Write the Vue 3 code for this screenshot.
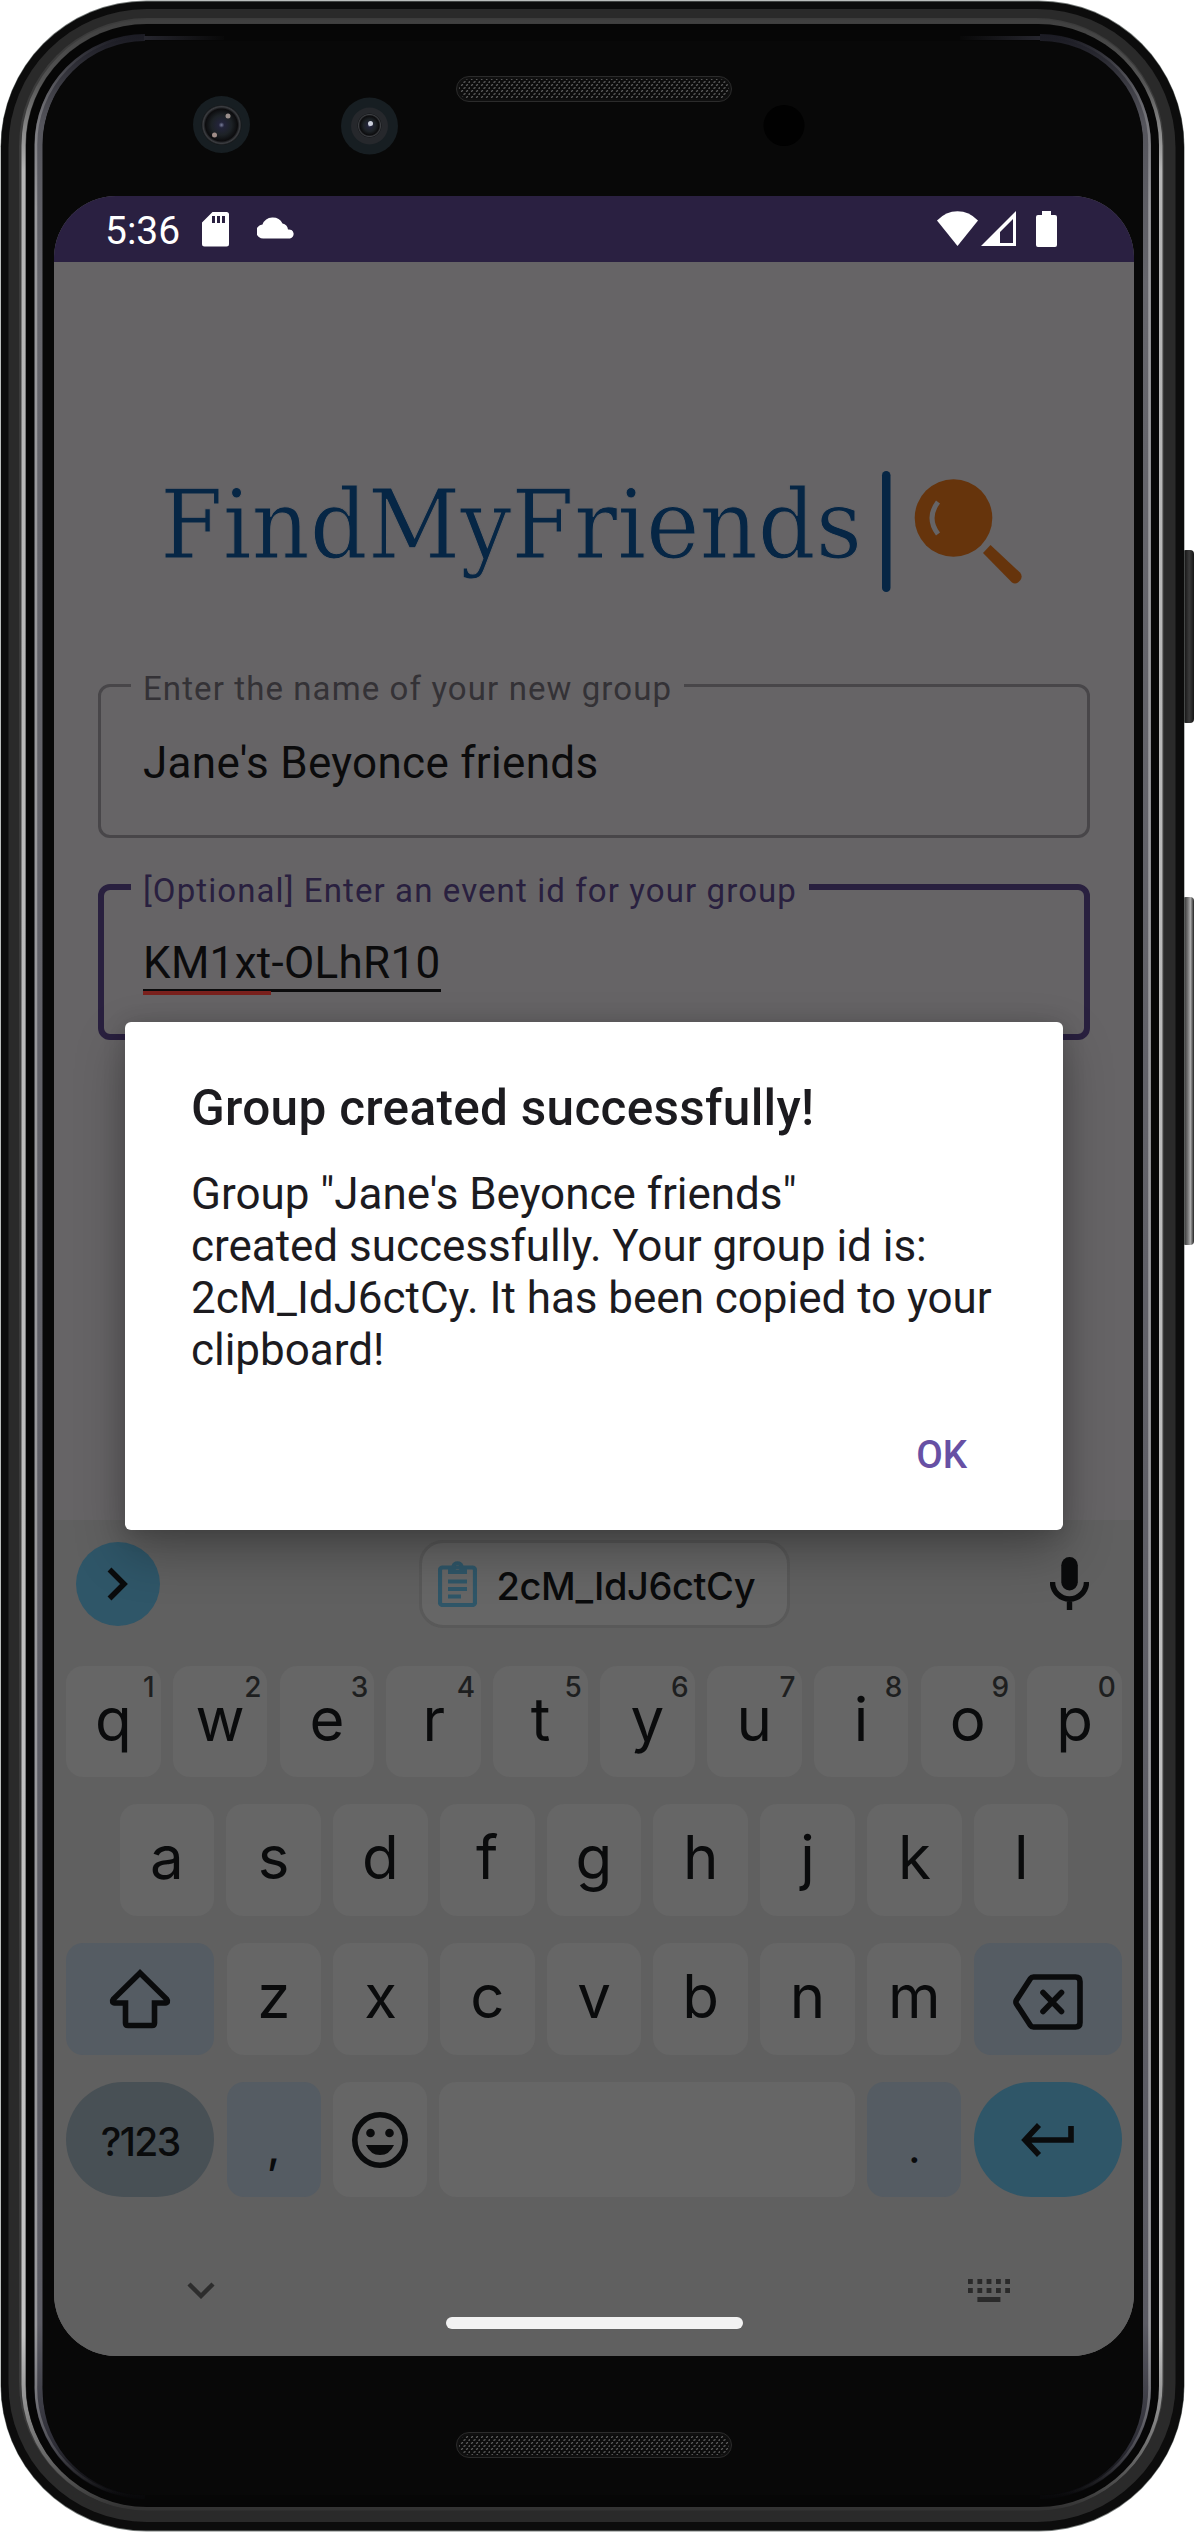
<script setup>
const topRow = [
  ['q', 1], ['w', 2], ['e', 3], ['r', 4], ['t', 5],
  ['y', 6], ['u', 7], ['i', 8], ['o', 9], ['p', 0],
]
const homeRow = [...'asdfghjkl']
const lowerRow = [...'zxcvbnm']
const keyDots = [0, 9.4, 18.6, 28, 37.2]
</script>

<template>
  <div class="device">
    <svg class="frame" viewBox="0 0 1194 2532" width="1194" height="2532" aria-hidden="true">
      <defs>
        <linearGradient id="metal" x1="0" y1="0" x2="0" y2="1">
          <stop offset="0" stop-color="#404040" />
          <stop offset="0.025" stop-color="#555" />
          <stop offset="0.06" stop-color="#b5b5b5" />
          <stop offset="0.93" stop-color="#c4c4c4" />
          <stop offset="0.98" stop-color="#666" />
          <stop offset="1" stop-color="#333" />
        </linearGradient>
        <linearGradient id="glint" x1="0" y1="0" x2="0" y2="1">
          <stop offset="0" stop-color="#1c1c24" />
          <stop offset="0.035" stop-color="#55555c" />
          <stop offset="0.1" stop-color="#66666c" />
          <stop offset="0.93" stop-color="#5c5c64" />
          <stop offset="0.98" stop-color="#2c2c35" />
          <stop offset="1" stop-color="#08080a" />
        </linearGradient>
        <linearGradient id="rim" x1="0" y1="0" x2="0" y2="1">
          <stop offset="0" stop-color="#99999c" stop-opacity="0" />
          <stop offset="0.07" stop-color="#99999c" />
          <stop offset="0.93" stop-color="#99999c" />
          <stop offset="1" stop-color="#99999c" stop-opacity="0" />
        </linearGradient>
        <linearGradient id="fadeL"><stop offset="0" stop-color="#26262e" /><stop offset="1" stop-color="#080808" /></linearGradient>
        <linearGradient id="fadeR"><stop offset="0" stop-color="#080808" /><stop offset="1" stop-color="#26262e" /></linearGradient>
        <linearGradient id="button"><stop offset="0" stop-color="#050505" /><stop offset="0.6" stop-color="#3a3a3a" /><stop offset="1" stop-color="#161616" /></linearGradient>
        <linearGradient id="buttonLit"><stop offset="0" stop-color="#111" /><stop offset="0.5" stop-color="#777" /><stop offset="0.7" stop-color="#aaa" /><stop offset="1" stop-color="#222" /></linearGradient>
        <pattern id="mesh" width="10" height="6" patternUnits="userSpaceOnUse">
          <rect width="10" height="6" fill="#0c0c0c" />
          <path d="M1 1.5l2-1M6 1.5l2-1M3.5 4.5l2-1M8.500 4.500l2-1" stroke="#6a6a6a" stroke-width="1.2" />
        </pattern>
        <radialGradient id="lens">
          <stop offset="0" stop-color="#7a7f9c" />
          <stop offset="0.14" stop-color="#23243a" />
          <stop offset="0.5" stop-color="#1d2226" />
          <stop offset="0.8" stop-color="#0c0c0e" />
          <stop offset="0.92" stop-color="#3c3e42" />
          <stop offset="1" stop-color="#121416" />
        </radialGradient>
      </defs>
      <rect x="1182" y="550" width="12" height="173" rx="4" fill="url(#button)" />
      <rect x="1182" y="897" width="12" height="348" rx="4" fill="url(#buttonLit)" />
      <rect x="0.500" y="0.500" width="1184" height="2531" rx="146" fill="#777c7a" />
      <rect x="1" y="1.500" width="1183" height="2529" rx="145" fill="#0c0c0c" />
      <rect x="8.500" y="9" width="1167" height="2513" rx="138" fill="#2a2a2a" />
      <rect x="19" y="18" width="1145" height="2492" rx="128" fill="#3c3c3c" />
      <rect x="23.500" y="21.500" width="1137" height="2487" rx="124" fill="none" stroke="url(#metal)" stroke-width="4" />
      <rect x="26" y="24" width="1133" height="2483" rx="121" fill="#060606" />
      <path d="M145 38A107 107 0 0 0 38.500 145V2385A107 107 0 0 0 145 2495" fill="none" stroke="url(#glint)" stroke-width="8" />
      <path d="M1040 38A107 107 0 0 1 1147 145V2385A107 107 0 0 1 1040 2495" fill="none" stroke="url(#glint)" stroke-width="8" />
      <path d="M142 35.500A109 109 0 0 0 36 145V2385A109 109 0 0 0 142 2497" fill="none" stroke="url(#rim)" stroke-width="2.500" />
      <path d="M1043 35.500A109 109 0 0 1 1149.500 145V2385A109 109 0 0 1 1043 2497" fill="none" stroke="url(#rim)" stroke-width="2.500" />
      <rect x="144" y="36" width="80" height="4" fill="url(#fadeL)" />
      <rect x="960" y="36" width="80" height="4" fill="url(#fadeR)" />
      <rect x="43" y="41" width="1100" height="2454" rx="102" fill="#080808" />
      <g v-for="y in [76.5, 2432.5]" :key="y">
        <rect x="456.500" :y="y" width="275" height="25" rx="12.500" fill="#101010" stroke="#2b2b2b" />
        <rect x="459" :y="y + 2.500" width="270" height="20" rx="10" fill="url(#mesh)" />
      </g>
      <circle cx="221.500" cy="124.500" r="28.500" fill="#171e22" />
      <circle cx="221.500" cy="125" r="20" fill="url(#lens)" />
      <circle cx="228" cy="116" r="2.500" fill="#9a8f8c" />
      <circle cx="214.500" cy="135" r="2.500" fill="#a08d88" />
      <circle cx="369.500" cy="126" r="28.500" fill="#171e22" />
      <circle cx="369.500" cy="126" r="18.500" fill="#26282c" />
      <circle cx="369.500" cy="125.500" r="12" fill="url(#lens)" />
      <circle cx="370.500" cy="123.500" r="2.500" fill="#ccd0dc" />
      <circle cx="784" cy="125.500" r="20.500" fill="#010101" />
    </svg>

    <div class="screen">
      <header class="status">
        <div class="status-left">
          <span class="clock">5:36</span>
          <svg class="sd" width="27" height="35" viewBox="0 0 27 35"><path fill="#fff" fill-rule="evenodd" d="M10.500 0H24.500Q27 0 27 2.500V32Q27 34.500 24.500 34.500H2.500Q0 34.500 0 32V10.500ZM10 4v7h3V4zm5 0v7h3V4zm5 0v7h3V4z" /></svg>
          <svg width="38" height="22" viewBox="0 0 38 22"><path fill="#fff" d="M7 21.500A7 7 0 0 1 5.500 7.500 11 11 0 0 1 25.500 6.500 7 7 0 0 1 31 12.500 4.600 4.600 0 0 1 33 21.500Z" /></svg>
        </div>
        <div class="status-right">
          <svg width="41" height="35" viewBox="0 0 41 35"><path fill="#fff" d="M20.500 35 0 9.500Q9 .3 20.500.3T41 9.500Z" /></svg>
          <svg class="signal" width="36" height="35" viewBox="0 0 36 35"><path fill="#fff" fill-rule="evenodd" d="M0 35 35 0V35ZM19 32H32V8L19 21Z" /></svg>
          <svg width="21" height="36" viewBox="0 0 21 36"><path fill="#fff" d="M6 0H15V4H19Q21 4 21 6V34Q21 36 19 36H2Q0 36 0 34V6Q0 4 2 4H6Z" /></svg>
        </div>
      </header>

      <main class="form">
        <svg class="logo" width="870" height="130" viewBox="160 466 870 130" role="img" aria-label="FindMyFriends">
          <text x="160" y="558" textLength="702" lengthAdjust="spacingAndGlyphs" class="wordmark">FindMyFriends</text>
          <rect x="882" y="471" width="8.500" height="121" rx="4.250" fill="#062645" />
          <circle cx="953.500" cy="518" r="38.800" fill="#66340c" />
          <path d="M938 502Q926 518 938 534" fill="none" stroke="#666466" stroke-width="5" />
          <path d="M990.500 545 1020 572.500Q1023 576 1020.500 580L1018 582.500Q1015 584.500 1012 582.500L983 553Z" fill="#66340c" />
        </svg>

        <fieldset class="field">
          <legend>Enter the name of your new group</legend>
          <span class="value">Jane's Beyonce friends</span>
        </fieldset>
        <fieldset class="field active">
          <legend>[Optional] Enter an event id for your group</legend>
          <span class="value composing"><span class="typo">KM1xt</span>-OLhR10</span>
        </fieldset>
      </main>

      <section class="keyboard">
        <div class="suggestions">
          <div class="expand">
            <svg width="22" height="34" viewBox="0 0 22 34"><path d="M2.500 2.500 17 17 2.500 31.500" fill="none" stroke="#0a0b0c" stroke-width="5.500" /></svg>
          </div>
          <div class="chip">
            <svg width="39" height="46" viewBox="0 0 39 46">
              <rect x="2" y="6.500" width="35" height="37.500" rx="2.500" fill="none" stroke="#2f5668" stroke-width="4.200" />
              <path fill="#2f5668" fill-rule="evenodd" d="M10 5H13.500A6.200 6.200 0 0 1 25.500 5H29V13H10ZM19.500 4.300a2.400 2.400 0 1 0 .01 0Z" />
              <path d="M10 20.500H29M10 28H29M10 35.500H23" stroke="#2f5668" stroke-width="4" />
            </svg>
            <span>2cM_IdJ6ctCy</span>
          </div>
          <svg class="mic" width="39" height="54" viewBox="0 0 39 54">
            <rect x="11.300" y="0" width="16.500" height="33.500" rx="8.200" fill="#0a0b0c" />
            <path d="M2.500 25A17 17 0 0 0 36.500 25M19.500 42V53" fill="none" stroke="#0a0b0c" stroke-width="5.400" />
          </svg>
        </div>

        <div class="row r1">
          <div v-for="[letter, digit] in topRow" :key="letter" class="key">
            {{ letter }}<span class="hint">{{ digit }}</span>
          </div>
        </div>
        <div class="row r2">
          <div v-for="letter in homeRow" :key="letter" class="key">{{ letter }}</div>
        </div>
        <div class="row r3">
          <div class="key icon wide tint">
            <svg width="62" height="60" viewBox="0 0 62 60"><path d="M31 4 4.500 30Q2 33.500 6 34H16.500V54Q16.500 56.500 19 56.500H43Q45.500 56.500 45.500 54V34H56Q60 33.500 57.500 30Z" fill="none" stroke="#0a0b0c" stroke-width="5.600" /></svg>
          </div>
          <div v-for="letter in lowerRow" :key="letter" class="key">{{ letter }}</div>
          <div class="key icon wide tint backspace">
            <svg width="70" height="56" viewBox="0 0 70 56"><path d="M20.500 3H62.500Q67 3 67 7.500V48.500Q67 53 62.500 53H20.500Q18.500 53 17.500 51.500L3.500 30Q2.300 28 3.500 26L17.500 4.500Q18.500 3 20.500 3ZM30 18.500 48.500 37.500M48.500 18.500 30 37.500" fill="none" stroke="#0a0b0c" stroke-width="5.600" stroke-linecap="round" /></svg>
          </div>
        </div>
        <div class="row r4">
          <div class="key icon wide pill symbols">?123</div>
          <div class="key tint punct comma">,</div>
          <div class="key icon">
            <svg width="56" height="56" viewBox="0 0 56 56">
              <circle cx="28" cy="28" r="25.200" fill="none" stroke="#0a0b0c" stroke-width="5.600" />
              <circle cx="18.500" cy="21" r="4.300" fill="#0a0b0c" />
              <circle cx="37.500" cy="21" r="4.300" fill="#0a0b0c" />
              <path d="M14 33H42Q37.500 43 28 43T14 33Z" fill="#0a0b0c" />
            </svg>
          </div>
          <div class="key space"></div>
          <div class="key tint punct">.</div>
          <div class="key icon wide pill enter">
            <svg width="53" height="34" viewBox="0 0 53 34"><path d="M50 3V17H5M18 2 4 17 18 32" fill="none" stroke="#0a0b0c" stroke-width="5.600" /></svg>
          </div>
        </div>

        <footer class="nav">
          <svg width="28" height="18" viewBox="0 0 28 18"><path d="M2 2 14 14 26 2" fill="none" stroke="#2d2d2d" stroke-width="4.400" /></svg>
          <svg width="42" height="24" viewBox="0 0 42 24" fill="#2a2a2a">
            <rect v-for="x in keyDots" :key="x" :x="x" y="0" width="4.800" height="5" />
            <rect v-for="x in keyDots" :key="'b' + x" :x="x" y="9" width="4.800" height="5" />
            <rect x="9.400" y="18" width="23" height="5" />
          </svg>
        </footer>
        <div class="home-bar"></div>
      </section>

      <div class="dialog" role="alertdialog">
        <h1>Group created successfully!</h1>
        <p>Group "Jane's Beyonce friends"<br />created successfully. Your group id is:<br />2cM_IdJ6ctCy. It has been copied to your<br />clipboard!</p>
        <button type="button">OK</button>
      </div>
    </div>
  </div>
</template>

<style>
body {
  background: #fff;
}
</style>

<style scoped>
.device {
  position: relative;
  box-sizing: border-box;
  width: 1194px;
  height: 2532px;
  padding: 196px 60px 176px 54px;
  font-family: Roboto, "Liberation Sans", sans-serif;
  overflow: hidden;
}
.frame {
  position: absolute;
  inset: 0;
}
svg {
  display: block;
  flex: none;
}
.screen {
  position: relative;
  display: flex;
  flex-direction: column;
  width: 1080px;
  height: 2160px;
  border-radius: 62px;
  overflow: hidden;
  background: #666466;
}
.status {
  display: flex;
  justify-content: space-between;
  height: 66px;
  box-sizing: border-box;
  padding: 15px 77px 0 51px;
  background: #2a2041;
}
.status-left,
.status-right {
  display: flex;
  align-items: flex-start;
}
.clock {
  width: 97px;
  font-size: 39px;
  line-height: 40px;
  color: #fff;
}
.sd {
  margin: 1px 28px 0 0;
}
.status-left svg:last-child {
  margin-top: 6px;
}
.signal {
  margin: 0 19px 0 3px;
}
.form {
  height: 1258px;
  box-sizing: border-box;
  padding: 204px 44px 0;
}
.logo {
  margin-left: 62px;
  overflow: visible;
}
.wordmark {
  font-family: "DejaVu Serif Condensed", "DejaVu Serif", serif;
  font-size: 96px;
  fill: #062645;
  stroke: #666466;
  stroke-width: 1px;
}
.field {
  box-sizing: border-box;
  height: 172px;
  width: 992px;
  margin: 70px 0 0;
  padding: 0 0 0 42px;
  border: 3px solid #484649;
  border-radius: 12px;
}
.field legend {
  margin-left: -12px;
  padding: 0 12px;
  height: 38px;
  font-size: 33px;
  line-height: 45px;
  letter-spacing: 1.1px;
  color: #343236;
  white-space: nowrap;
}
.value {
  display: block;
  margin-top: 33px;
  font-size: 44px;
  line-height: 52px;
  letter-spacing: 0.3px;
  color: #0b0b0c;
}
.field.active {
  margin-top: 30px;
  border: 6px solid #29203f;
  padding-left: 39px;
}
.active legend {
  color: #29203f;
}
.active .value {
  margin-top: 32px;
}
.composing {
  position: relative;
  width: max-content;
  line-height: 51px;
  border-bottom: 3px solid #0b0b0c;
}
.typo {
  position: relative;
}
.typo::after {
  content: "";
  position: absolute;
  left: 0;
  right: 0;
  bottom: -6px;
  height: 4px;
  background: #7a211d;
}
.keyboard {
  flex: 1;
  display: flex;
  flex-direction: column;
  background: #606060;
  font-family: Inter, "Open Sans", sans-serif;
  color: #0a0b0c;
}
.suggestions {
  display: flex;
  align-items: center;
  justify-content: space-between;
  height: 88px;
  margin-top: 20px;
  padding: 0 45px 0 22px;
}
.expand {
  display: flex;
  align-items: center;
  justify-content: center;
  width: 84px;
  height: 84px;
  border-radius: 50%;
  background: #2f5668;
}
.chip {
  display: flex;
  align-items: center;
  gap: 20px;
  box-sizing: border-box;
  width: 371px;
  height: 88px;
  margin-left: -2px;
  padding-left: 16px;
  border: 3px solid #595959;
  border-radius: 24px;
  background: #666;
  font-size: 38px;
  font-weight: 500;
  letter-spacing: -0.4px;
}
.chip span {
  padding-top: 3px;
}
.row {
  display: flex;
  gap: 12.2px;
  height: 112px;
  margin: 0 12px;
}
.r1 {
  height: 111px;
  margin-top: 38px;
}
.r2 {
  margin: 27px 65.500px 0;
}
.r3 {
  margin-top: 27px;
}
.r4 {
  height: 115px;
  margin-top: 27px;
}
.key {
  position: relative;
  display: flex;
  align-items: center;
  justify-content: center;
  flex: 1 1 0;
  box-sizing: border-box;
  padding-bottom: 6px;
  border-radius: 17px;
  background: #666;
  font-size: 60px;
  line-height: 70px;
}
.key.icon {
  padding-bottom: 0;
}
.key.backspace {
  padding-top: 5px;
}
.hint {
  position: absolute;
  top: 4px;
  right: 6px;
  font-size: 28px;
  font-weight: 500;
  line-height: 34px;
  color: #1e1f20;
}
.key.wide {
  flex: 0 0 148.400px;
}
.tint {
  background: #555c63;
}
.pill {
  border-radius: 58px;
}
.key.symbols {
  padding-top: 4px;
  background: #485055;
  font-size: 39px;
  font-weight: 500;
  letter-spacing: -1.6px;
}
.key.punct {
  padding: 14px 0 0;
  font-size: 44px;
}
.key.comma {
  font-weight: 500;
}
.key.space {
  flex: 0 0 415.500px;
}
.enter {
  background: #2f5668;
}
.nav {
  display: flex;
  justify-content: space-between;
  margin-top: 82px;
  padding: 0 124px 0 133px;
}
.nav svg:first-child {
  margin-top: 3px;
}
.home-bar {
  width: 297px;
  height: 12px;
  margin: 14px auto 0;
  border-radius: 6px;
  background: #f2f2f2;
}
.dialog {
  position: absolute;
  left: 71px;
  top: 826px;
  display: flex;
  flex-direction: column;
  box-sizing: border-box;
  width: 938px;
  height: 508px;
  padding: 57px 66px 0;
  border-radius: 6px;
  background: #fff;
  box-shadow: 0 22px 50px rgba(0, 0, 0, 0.28), 0 2px 22px rgba(0, 0, 0, 0.16);
  color: #1c1b1f;
}
h1 {
  margin: 0;
  font-size: 49.5px;
  font-weight: 500;
  line-height: 58px;
  letter-spacing: 0.3px;
  white-space: nowrap;
}
p {
  margin: 31px 0 0;
  font-size: 44px;
  line-height: 52px;
  letter-spacing: -0.03px;
  white-space: nowrap;
}
button {
  align-self: flex-end;
  margin: 56px 30px 0 0;
  padding: 0;
  border: 0;
  background: none;
  font: 500 38.5px/46px Roboto, sans-serif;
  color: #6750a4;
}
</style>
